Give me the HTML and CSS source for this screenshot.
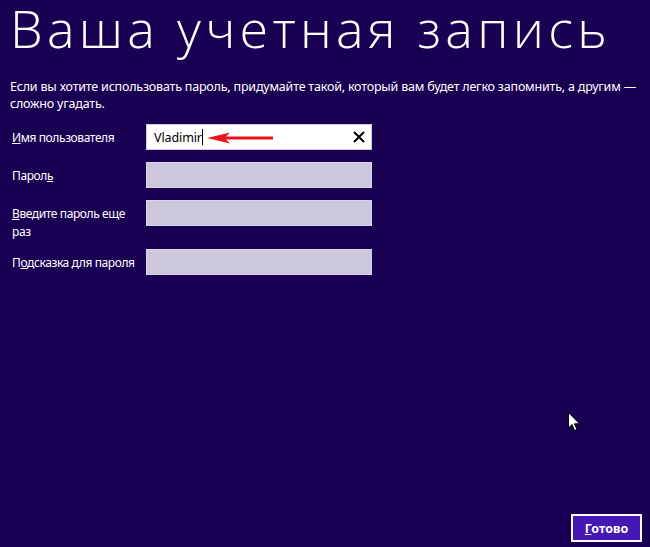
FILE: index.html
```html
<!DOCTYPE html>
<html lang="ru">
<head>
<meta charset="utf-8">
<title>Ваша учетная запись</title>
<link rel="stylesheet" href="styles.css">
</head>
<body>
<div class="page">
  <h1 class="title">Ваша учетная запись</h1>
  <p class="intro">Если вы хотите использовать пароль, придумайте такой, который вам будет легко запомнить, а другим —<br>сложно угадать.</p>
  <div class="form">
    <div class="label"><u>И</u>мя пользователя</div>
    <div class="field field-active">
      <span class="value">Vladimir</span><span class="caret"></span>
      <svg class="clear" width="12" height="12" viewBox="0 0 12 12"><path d="M1 1 L11 11 M11 1 L1 11" stroke="#000" stroke-width="2" fill="none"/></svg>
      <svg class="annot" width="66" height="12" viewBox="0 0 66 12"><path d="M0 6 L23 0.5 L19 4.5 L66 4.5 L66 7.5 L19 7.5 L23 11.5 Z" fill="#e8141c"/></svg>
    </div>
    <div class="label">Парол<u>ь</u></div>
    <div class="field"></div>
    <div class="label"><u>В</u>ведите пароль еще раз</div>
    <div class="field"></div>
    <div class="label">П<u>о</u>дсказка для пароля</div>
    <div class="field"></div>
  </div>
  <div class="footer">
    <button class="btn"><u>Г</u>отово</button>
  </div>
  <svg class="pointer" width="13" height="20" viewBox="0 0 13 20"><path d="M0.5 0.5 L0.5 16 L4 12.5 L6.5 18.5 L9 17.5 L6.5 11.8 L11.5 11.8 Z" fill="#fff" stroke="#000" stroke-width="1"/></svg>
</div>
</body>
</html>
```
FILE: styles.css
```css
html, body {
  margin: 0;
  padding: 0;
  background: #1a0052;
}
.page {
  position: relative;
  height: 547px;
  box-sizing: border-box;
  display: flex;
  flex-direction: column;
  padding: 0 8px 5px 10px;
  font-family: "Noto Sans", "Open Sans", sans-serif;
  color: #fff;
}
.title {
  margin: 0;
  padding: 0;
  font-family: "Open Sans", "Noto Sans", sans-serif;
  font-weight: 300;
  font-size: 52px;
  line-height: 56px;
  letter-spacing: 4.3px;
  white-space: nowrap;
  color: #fff;
}
.intro {
  margin: 22px 0 0 0;
  font-size: 12.5px;
  line-height: 17px;
  letter-spacing: -0.2px;
}
.form {
  margin-top: 12px;
  display: grid;
  grid-template-columns: 136px 226px;
  row-gap: 8px;
  align-items: start;
}
.label {
  padding: 5px 0 0 2px;
  font-size: 12px;
  line-height: 18px;
  width: 126px;
  letter-spacing: -0.4px;
}
.label u {
  text-decoration-thickness: 1px;
  text-underline-offset: 1px;
}
.field {
  height: 26px;
  margin-bottom: 4px;
  box-sizing: border-box;
  background: #cdc7dd;
  border: 1px solid #d9d4e6;
}
.field-active {
  position: relative;
  background: #fff;
  border-color: #d0cbe0;
  display: flex;
  align-items: center;
  padding-left: 7px;
  color: #000;
  font-size: 12.5px;
}
.value {
  letter-spacing: -0.1px;
}
.caret {
  display: inline-block;
  width: 1px;
  height: 16px;
  background: #000;
}
.clear {
  position: absolute;
  right: 6px;
  top: 6px;
}
.annot {
  position: absolute;
  left: 60px;
  top: 7px;
}
.footer {
  margin-top: auto;
  display: flex;
  justify-content: flex-end;
}
.btn {
  width: 71px;
  height: 28px;
  background: #4617b4;
  border: 2px solid #fff;
  color: #fff;
  font-family: "Noto Sans", sans-serif;
  font-weight: 700;
  font-size: 12.5px;
  padding: 0;
}
.pointer {
  position: absolute;
  left: 568px;
  top: 412px;
}
```
